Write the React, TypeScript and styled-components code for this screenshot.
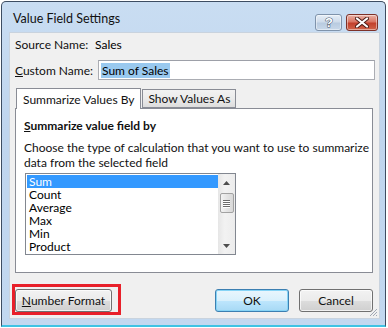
import React from "react";
import styled, { createGlobalStyle } from "styled-components";

const Global = createGlobalStyle`
	html, body {
		margin: 0;
		padding: 0;
		background: #ffffff;
	}
	body {
		font-family: Lato, "Noto Sans", sans-serif;
		font-size: 12px;
		color: #000;
	}
`;

const Window = styled.div`
	margin: 1px 0 0 1px;
	width: 385px;
	box-sizing: border-box;
	border: 1px solid #3d4d62;
	border-bottom: 2px solid #3fc3e4;
	border-radius: 5px 5px 0 0;
	background: linear-gradient(180deg, #c9ddf2 0%, #bfd5ee 40%, #c2d8f0 100%);
	padding: 0 5px 6px 7px;
	display: flex;
	flex-direction: column;
`;

const TitleBar = styled.div`
	height: 30px;
	display: flex;
	align-items: center;
	padding-left: 4px;
`;

const Title = styled.div`
	flex: 1;
	font-size: 12.5px;
	color: #111;
	padding-top: 2px;
`;

const CaptionButton = styled.div<{ $close?: boolean }>`
	height: 17px;
	width: ${(p) => (p.$close ? "32px" : "27px")};
	margin-left: ${(p) => (p.$close ? "4px" : "0")};
	margin-right: ${(p) => (p.$close ? "2px" : "0")};
	margin-top: 10px;
	box-sizing: border-box;
	border: 1px solid ${(p) => (p.$close ? "#7d3128" : "#7f93ab")};
	border-radius: 3px;
	background: ${(p) =>
		p.$close
			? "linear-gradient(180deg, #eab3a8 0%, #d97563 45%, #c2402c 55%, #d0644a 100%)"
			: "linear-gradient(180deg, #e6eef7 0%, #cfdceb 45%, #b9cbe0 55%, #c8d8ea 100%)"};
	display: flex;
	align-items: center;
	justify-content: center;
	box-shadow: inset 0 0 0 1px rgba(255, 255, 255, 0.45);
`;

const Client = styled.div`
	height: 287px;
	box-sizing: border-box;
	background: #f0f0f0;
	border: 1px solid #c9d3de;
	padding: 3px 0 0 5px;
	display: flex;
	flex-direction: column;
	position: relative;
	white-space: nowrap;
`;

const FieldRow = styled.div<{ $h: number; $top?: number }>`
	height: ${(p) => p.$h}px;
	margin-top: ${(p) => p.$top ?? 0}px;
	display: flex;
	align-items: center;
	line-height: 15px;
`;

const Label = styled.span`
	width: 80px;
	flex-shrink: 0;
	color: #111;
`;

const Key = styled.span`
	text-decoration: underline;
`;

const TextBox = styled.div`
	margin-left: 3px;
	width: 277px;
	height: 20px;
	box-sizing: border-box;
	border: 1px solid #abadb3;
	border-top-color: #9da0a8;
	background: #fff;
	display: flex;
	align-items: center;
	padding-left: 2px;
`;

const Selected = styled.span`
	background: #99c9ef;
	padding: 0 1px;
	line-height: 15px;
`;

const Tabs = styled.div`
	margin-top: 8px;
	height: 20px;
	display: flex;
	align-items: flex-end;
	padding-left: 1px;
	position: relative;
	z-index: 1;
`;

const Tab = styled.div<{ $active?: boolean }>`
	box-sizing: border-box;
	height: ${(p) => (p.$active ? "21px" : "19px")};
	margin-bottom: ${(p) => (p.$active ? "-1px" : "0")};
	margin-left: ${(p) => (p.$active ? "0" : "1px")};
	padding: 0 ${(p) => (p.$active ? "6px" : "5px")};
	border: 1px solid #898c95;
	border-bottom: ${(p) => (p.$active ? "none" : "1px solid #898c95")};
	background: ${(p) =>
		p.$active ? "#ffffff" : "linear-gradient(180deg, #f2f2f2 0%, #ebebeb 50%, #dddddd 100%)"};
	display: flex;
	align-items: center;
	line-height: 15px;
	color: #111;
`;

const Panel = styled.div`
	width: 358px;
	height: 165px;
	box-sizing: border-box;
	border: 1px solid #898c95;
	background: #fff;
	padding: 9px 0 0 8px;
	display: flex;
	flex-direction: column;
`;

const Heading = styled.div`
	font-weight: bold;
	line-height: 16px;
	color: #111;
`;

const Prompt = styled.div`
	margin-top: 6px;
	line-height: 15px;
	color: #111;
`;

const ListBox = styled.div`
	margin-top: 3px;
	margin-left: 1px;
	width: 211px;
	height: 82px;
	box-sizing: border-box;
	border: 1px solid #828790;
	background: #fff;
	display: flex;
	padding: 1px 0 1px 1px;
`;

const Items = styled.div`
	flex: 1;
	display: flex;
	flex-direction: column;
`;

const Item = styled.div<{ $selected?: boolean }>`
	height: 13px;
	line-height: 13px;
	padding-left: 2px;
	background: ${(p) => (p.$selected ? "#3399ff" : "transparent")};
	color: ${(p) => (p.$selected ? "#fff" : "#000")};
`;

const ScrollBar = styled.div`
	width: 17px;
	margin-top: -1px;
	margin-bottom: -1px;
	background: linear-gradient(90deg, #e6e6e6, #f2f2f2 40%, #ececec);
	display: flex;
	flex-direction: column;
	align-items: center;
`;

const Arrow = styled.div`
	height: 17px;
	width: 17px;
	display: flex;
	align-items: center;
	justify-content: center;
`;

const Thumb = styled.div`
	margin-top: 2px;
	width: 14px;
	height: 20px;
	box-sizing: border-box;
	border: 1px solid #a2a2a2;
	border-radius: 2px;
	background: linear-gradient(90deg, #f3f3f3, #e4e4e4 50%, #d8d8d8);
	display: flex;
	flex-direction: column;
	align-items: center;
	justify-content: center;
	gap: 1px;
`;

const Grip = styled.div`
	width: 7px;
	height: 1px;
	background: #6b6b6b;
	box-shadow: 0 1px 0 #fff;
`;

const Spacer = styled.div`
	flex: 1;
`;

const ButtonRow = styled.div`
	margin-top: 16px;
	height: 23px;
	display: flex;
	align-items: center;
`;

const Button = styled.div<{ $w: number; $default?: boolean }>`
	width: ${(p) => p.$w}px;
	height: 23px;
	box-sizing: border-box;
	border: 1px solid ${(p) => (p.$default ? "#3c7fb1" : "#707070")};
	border-radius: 3px;
	background: ${(p) =>
		p.$default
			? "linear-gradient(180deg, #eaf6fd 0%, #d9f0fc 50%, #bee6fd 51%, #a7d9f5 100%)"
			: "linear-gradient(180deg, #f2f2f2 0%, #ebebeb 50%, #dddddd 51%, #cfcfcf 100%)"};
	box-shadow: inset 0 0 0 1px ${(p) => (p.$default ? "#86d4f6" : "rgba(255,255,255,0.7)")};
	display: flex;
	align-items: center;
	justify-content: center;
	color: #111;
	position: relative;
	flex-shrink: 0;
`;

const Callout = styled.div`
	position: absolute;
	left: -4px;
	top: -6px;
	width: 109px;
	height: 31px;
	box-sizing: border-box;
	border: 3px solid #e8202a;
`;

const Gap = styled.div<{ $w: number }>`
	width: ${(p) => p.$w}px;
	flex-shrink: 0;
`;

const ResizeGrip = styled.svg`
	position: absolute;
	right: 1px;
	bottom: 1px;
`;

const items = ["Sum", "Count", "Average", "Max", "Min", "Product"];

export default function App() {
	return (
		<>
			<Global />
			<Window>
				<TitleBar>
					<Title>Value Field Settings</Title>
					<CaptionButton>
						<svg width="12" height="13" viewBox="0 0 12 13">
							<text
								x="6"
								y="11"
								textAnchor="middle"
								fontFamily="Liberation Sans, sans-serif"
								fontWeight="bold"
								fontSize="13"
								fill="#fff"
								stroke="#44546a"
								strokeWidth="1"
								paintOrder="stroke"
							>
								?
							</text>
						</svg>
					</CaptionButton>
					<CaptionButton $close>
						<svg width="14" height="11" viewBox="0 0 14 11">
							<path d="M2 1.5 L12 9.5 M12 1.5 L2 9.5" stroke="#4a1b15" strokeWidth="4" strokeLinecap="round" />
							<path d="M2 1.5 L12 9.5 M12 1.5 L2 9.5" stroke="#fff" strokeWidth="2.2" strokeLinecap="round" />
						</svg>
					</CaptionButton>
				</TitleBar>
				<Client>
					<FieldRow $h={16}>
						<Label>Source Name:</Label>
						<span>Sales</span>
					</FieldRow>
					<FieldRow $h={20} $top={8}>
						<Label>
							<Key>C</Key>ustom Name:
						</Label>
						<TextBox>
							<Selected>Sum of Sales</Selected>
						</TextBox>
					</FieldRow>
					<Tabs>
						<Tab $active>Summarize Values By</Tab>
						<Tab>Show Values As</Tab>
					</Tabs>
					<Panel>
						<Heading>
							<Key>S</Key>ummarize value field by
						</Heading>
						<Prompt>
							Choose the type of calculation that you want to use to summarize
							<br />
							data from the selected field
						</Prompt>
						<ListBox>
							<Items>
								{items.map((it, i) => (
									<Item key={it} $selected={i === 0}>
										{it}
									</Item>
								))}
							</Items>
							<ScrollBar>
								<Arrow>
									<svg width="7" height="4" viewBox="0 0 7 4">
										<path d="M0 4 L3.5 0 L7 4 Z" fill="#4d4d4d" />
									</svg>
								</Arrow>
								<Thumb>
									<Grip />
									<Grip />
									<Grip />
									<Grip />
								</Thumb>
								<Spacer />
								<Arrow>
									<svg width="7" height="4" viewBox="0 0 7 4">
										<path d="M0 0 L7 0 L3.5 4 Z" fill="#4d4d4d" />
									</svg>
								</Arrow>
							</ScrollBar>
						</ListBox>
					</Panel>
					<ButtonRow>
						<Button $w={97}>
							<span>
								<Key>N</Key>umber Format
							</span>
							<Callout />
						</Button>
						<Gap $w={103} />
						<Button $w={74} $default>
							OK
						</Button>
						<Gap $w={10} />
						<Button $w={74}>Cancel</Button>
					</ButtonRow>
					<ResizeGrip width="10" height="10" viewBox="0 0 10 10">
						<path d="M9 2 L2 9 M9 5 L5 9 M9 8 L8 9" stroke="#a0a8b4" strokeWidth="1" />
					</ResizeGrip>
				</Client>
			</Window>
		</>
	);
}
